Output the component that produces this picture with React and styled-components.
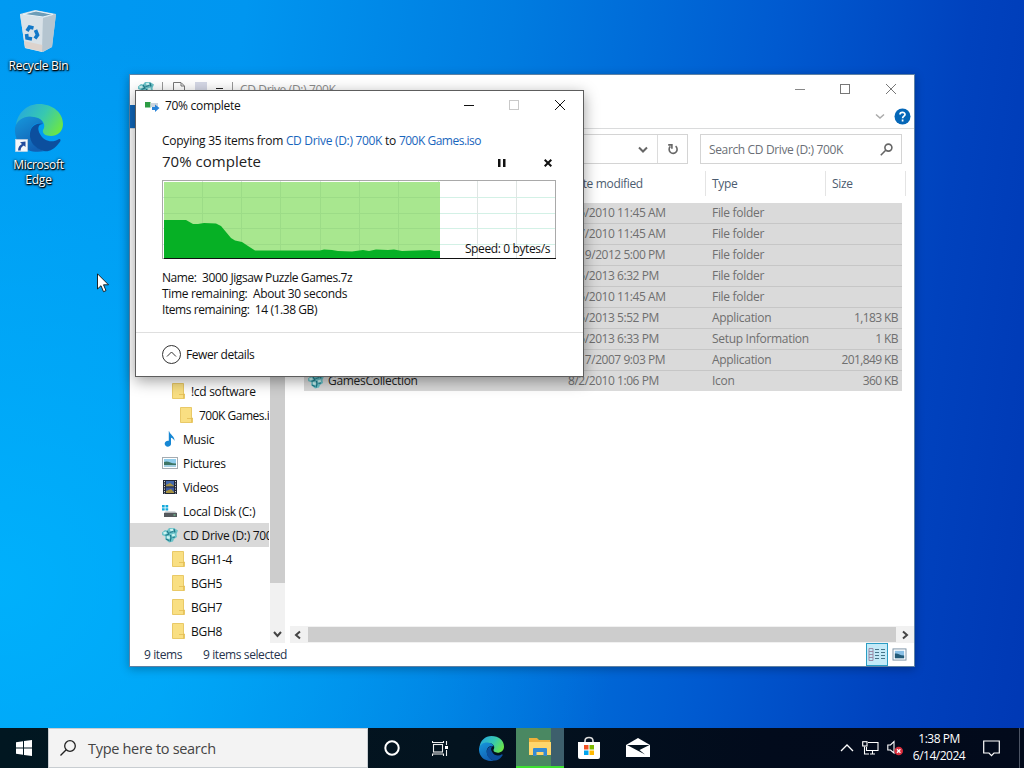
import React from "react";
import styled, { createGlobalStyle } from "styled-components";

const GlobalStyle = createGlobalStyle`
    * {
        box-sizing: border-box;
    }

    body {
        margin: 0;
        overflow: hidden;
        font-family: "Open Sans", "Noto Sans", sans-serif;
        font-size: 12px;
    }

    svg {
        display: block;
        flex-shrink: 0;
    }
`;

const Desktop = styled.div`
    position: relative;
    width: 1024px;
    height: 768px;
    overflow: hidden;
    display: flex;
    flex-direction: column;
    justify-content: space-between;
    background:
        radial-gradient(ellipse 620px 560px at 0% 76%, rgba(0, 184, 255, 0.75) 0%, rgba(0, 176, 250, 0) 100%),
        linear-gradient(97deg, #009af2 0%, #0096f0 22%, #007ce0 46%, #005ad0 70%, #0042be 87%, #0038b4 100%);
`;

/* ---------- desktop icons ---------- */

const Shortcuts = styled.div`
    display: flex;
    flex-direction: column;
    gap: 30px;
    width: 77px;
    padding-top: 6px;
`;

const Shortcut = styled.div`
    display: flex;
    flex-direction: column;
    align-items: center;
    text-align: center;
    color: #fff;
    line-height: 15px;
    letter-spacing: -0.25px;
    text-shadow: 1px 1px 1px #000, 0 1px 2px #000, 0 0 3px rgba(0, 0, 0, 0.8);

    svg {
        margin-bottom: 4px;
    }
`;

const RecycleIcon = () => (
    <svg width="48" height="48" viewBox="0 0 48 48">
        <path d="M5 8 L20 4 L41 8 L37 41 L28 46 L10 42 Z" fill="#c9dbe6" />
        <path d="M5 8 L28 12 L27 46 L10 42 Z" fill="#d9e2e8" />
        <path d="M28 12 L41 8 L37 41 L27 46 Z" fill="#b5c5d0" />
        <path d="M8 8.3 L21 5 L38 8.4 L28 11 Z" fill="#6d9db8" stroke="#e9f2f7" strokeWidth="1" />
        <path d="M9 35 L27.4 39 L27 45.5 L10.4 41.5 Z" fill="#ddd0c6" opacity=".8" />
        <g fill="none" stroke="#1278c8" strokeWidth="3.6">
            <path d="M12 25 L14.5 21 L18.5 22" />
            <path d="M20.5 24 L22.5 29 L20 32.5" />
            <path d="M17 33 L12 32 L11.6 28" />
        </g>
    </svg>
);

const EdgeArt = ({ id }) => (
    <>
        <defs>
            <linearGradient id={id + "a"} x1="0" y1="0.3" x2="1" y2="0.75">
                <stop offset="0" stopColor="#27a9dc" />
                <stop offset=".5" stopColor="#37c8b0" />
                <stop offset="1" stopColor="#6fe83f" />
            </linearGradient>
            <linearGradient id={id + "b"} x1="0" y1="0" x2="0.5" y2="1">
                <stop offset="0" stopColor="#1698dc" />
                <stop offset="1" stopColor="#1260b4" />
            </linearGradient>
        </defs>
        <path d="M1 22 C2 9 12 0 24 0 C38 0 48 9 48 20 C48 28 42 32 36 32 C30 32 27 29 28 26 C31 22 29 15 21 14 C12 13 4 17 1 22 Z" fill={"url(#" + id + "a)"} />
        <path d="M0 24 C2 15 11 11 19 13 C25 14 28 17 28 20 C20 17 14 24 15 31 C16 40 23 46 30 47 C12 51 -1 40 0 24 Z" fill={"url(#" + id + "b)"} />
        <path d="M28 20 C23 20 22 25 25 30 C29 38 38 39 44 35 C46 35 46 37 44 39 C39 46 33 48 29 47 C20 45 14 37 15 30 C15 24 20 18 28 20 Z" fill="#0c4f9e" />
    </>
);

const EdgeShortcutIcon = () => (
    <svg width="50" height="50" viewBox="-1 -1 50 50">
        <EdgeArt id="desk" />
        <rect x="0.5" y="35.5" width="12" height="12" fill="#f5f7fa" stroke="#cfd8e2" strokeWidth=".6" />
        <path d="M3 46.5 C3 43 5 41 7 40 L5 38.2 L10.5 37.5 L10.5 43 L8.8 41.6 C6 43 5.5 45 5.8 46.5 Z" fill="#234b9c" />
    </svg>
);

/* ---------- explorer window ---------- */

const Explorer = styled.section`
    position: absolute;
    left: 129px;
    top: 74px;
    width: 786px;
    height: 593px;
    display: flex;
    flex-direction: column;
    background: #fff;
    border: 1px solid rgba(25, 75, 125, 0.7);
    color: #3b4658;
    box-shadow: 0 2px 9px rgba(0, 0, 0, 0.28);
`;

const ExplorerTitle = styled.header`
    display: flex;
    align-items: center;
    height: 29px;
    padding: 0 0 1px 8px;
    color: #8c8c8c;
`;

const QuickAccess = styled.div`
    display: flex;
    align-items: center;
    gap: 7px;
    flex: 1;
    letter-spacing: -0.35px;

    span {
        margin-left: -1px;
    }
`;

const WindowButtons = styled.div`
    display: flex;

    svg {
        width: 46px;
    }
`;

const RibbonTabs = styled.div`
    display: flex;
    align-items: center;
    justify-content: flex-end;
    gap: 9px;
    height: 25px;
    padding-right: 3px;
    border-bottom: 1px solid #dadbdc;
`;

const FileTab = styled.div`
    width: 56px;
    height: 23px;
    margin-right: auto;
    background: #1068bc;
`;

const AddressRow = styled.div`
    display: flex;
    gap: 12px;
    padding: 5px 12px 5px 100px;
    height: 40px;
`;

const Box = styled.div`
    display: flex;
    align-items: center;
    justify-content: space-between;
    width: ${({ $width }) => ($width ? $width + "px" : "auto")};
    flex: ${({ $width }) => ($width ? "none" : 1)};
    height: 30px;
    padding: 0 ${({ $width }) => ($width ? 8 : 0)}px 0 8px;
    border: 1px solid #d4d4d4;
    color: #6b6f76;
    letter-spacing: -0.36px;
`;

const AddressTools = styled.div`
    display: flex;
    align-items: center;
    margin-left: auto;
    height: 100%;
`;

const RefreshButton = styled.div`
    display: grid;
    place-items: center;
    width: 30px;
    height: 100%;
    margin-left: 9px;
    border-left: 1px solid #dcdcdc;
`;

const Panes = styled.div`
    display: flex;
    height: 474px;
`;

const NavPane = styled.nav`
    display: flex;
    flex-direction: column;
    justify-content: flex-end;
    width: 139px;
    margin-right: 1px;
    overflow: hidden;
    color: #111;
`;

const NavItem = styled.div`
    display: flex;
    align-items: center;
    flex: none;
    gap: 5px;
    height: 24px;
    padding-left: ${({ $level }) => ($level ? 33 : 32) + $level * 8}px;
    background: ${({ $selected }) => ($selected ? "#d9d9d9" : "transparent")};
    white-space: nowrap;
    letter-spacing: ${({ $level }) => ($level === 2 ? -0.5 : -0.3)}px;
`;

const VScroll = styled.div`
    display: flex;
    flex-direction: column;
    align-items: center;
    justify-content: space-between;
    width: 15px;
    padding-bottom: 4px;
    background: #f1f1f1;
`;

const VThumb = styled.div`
    width: 100%;
    height: 414px;
    background: #cdcdcd;
`;

const FilePane = styled.main`
    display: flex;
    flex-direction: column;
    flex: 1;
    margin-left: 5px;
    min-width: 0;
`;

const columns = "258px 144px 120px 80px";

const Columns = styled.div`
    display: grid;
    grid-template-columns: ${columns};
    height: 25px;
    margin: 2px 0 7px 14px;
    color: #4c5c70;
    letter-spacing: -0.35px;
`;

const Column = styled.div`
    display: flex;
    align-items: center;
    padding-left: 6px;
    border-right: 1px solid #e4e4e4;
`;

const FileList = styled.div`
    flex: 1;
    margin-left: 14px;
    width: 598px;
`;

const FileRow = styled.div`
    display: grid;
    grid-template-columns: ${columns};
    align-items: center;
    height: 21px;
    background: #dadada;
    border-bottom: 1px solid #c6c6c6;
    color: #6f6f6f;
    letter-spacing: -0.28px;

    &:last-child {
        height: 20px;
        border-bottom: none;
    }
`;

const Cell = styled.div`
    display: flex;
    align-items: center;
    justify-content: ${({ $right }) => ($right ? "flex-end" : "flex-start")};
    gap: 4px;
    padding-left: ${({ $dark }) => ($dark ? 4 : 6)}px;
    padding-right: ${({ $right }) => ($right ? 8 : 0)}px;
    height: 20px;
    padding-bottom: 1px;
    white-space: nowrap;
    letter-spacing: ${({ $tight, $right }) => ($right ? -0.6 : $tight ? -0.45 : -0.3)}px;
    color: ${({ $dark }) => ($dark ? "#222" : "inherit")};
`;

const HScroll = styled.div`
    display: flex;
    align-items: center;
    justify-content: space-between;
    height: 17px;
    padding: 0 4px 0 3px;
    background: #f1f1f1;
`;

const HThumb = styled.div`
    width: 588px;
    height: 15px;
    background: #cdcdcd;
`;

const StatusBar = styled.footer`
    display: flex;
    align-items: center;
    gap: 21px;
    height: 23px;
    padding: 0 7px 0 14px;
    color: #26334d;
    letter-spacing: -0.4px;
`;

const ViewModes = styled.div`
    display: flex;
    align-items: center;
    gap: 4px;
    margin-left: auto;
`;

const ActiveView = styled.div`
    display: grid;
    place-items: center;
    width: 22px;
    height: 23px;
    background: #c3eaf8;
    border: 1px solid #2b9dc4;
`;

const FolderIcon = () => (
    <svg width="15" height="16" viewBox="0 0 15 16">
        <path d="M1.5 .5 H12.5 V11 H13.5 V15.5 H1.5 Z" fill="#f9df82" stroke="#e6c45c" strokeWidth=".9" />
        <path d="M8 11.5 H13.5 M12.5 11 V15.5" fill="none" stroke="#e3bd55" strokeWidth=".8" />
    </svg>
);

const MusicIcon = () => (
    <svg width="16" height="16" viewBox="0 0 16 16">
        <path d="M7 0 C8 4 13 5 12.5 10 C12 8 10 7 9 6.8 V12 A3.2 3 0 1 1 6.8 9.8 V0 Z" fill="#1687d4" />
    </svg>
);

const PicturesIcon = () => (
    <svg width="16" height="16" viewBox="0 0 16 16">
        <rect x=".5" y="2.5" width="15" height="11" fill="#fff" stroke="#a4acb2" />
        <path d="M2 4 H14 V12 H2 Z" fill="#8fcdec" />
        <path d="M2 7 C6 5 9 9 14 8.5 V11 H2 Z" fill="#3d7565" />
        <path d="M2 10 H14 V12 H2 Z" fill="#a3cfe2" />
    </svg>
);

const VideosIcon = () => (
    <svg width="16" height="16" viewBox="0 0 16 16">
        <rect x="1" y="1" width="14" height="14" fill="#222838" />
        <rect x="4" y="2" width="8" height="5.3" fill="#4469ad" />
        <rect x="4" y="8.5" width="8" height="5.5" fill="#3a58a2" />
        <path d="M4 6 L8 4 L12 6.8 V7.3 H4 Z M4 12 L9 10 L12 13 V14 H4 Z" fill="#a69243" />
        <path d="M2.5 2 V15 M13.5 2 V15" stroke="#d2d6da" strokeDasharray="1.2 1.3" />
    </svg>
);

const DiskIcon = () => (
    <svg width="16" height="16" viewBox="0 0 16 16">
        <path d="M0 2 H2.7 V4.4 H0 Z M3.5 2 H6.2 V4.4 H3.5 Z M0 5.2 H2.7 V7.6 H0 Z M3.5 5.2 H6.2 V7.6 H3.5 Z" fill="#15aadb" />
        <path d="M3.5 8.5 H13 L15 10 H2 Z" fill="#b3b7bb" />
        <path d="M2 10 H15 V14 H2 Z" fill="#55595d" />
        <path d="M11.5 12 H13.5" stroke="#7ce2a2" />
    </svg>
);

const CdIcon = () => (
    <svg width="16" height="16" viewBox="0 0 16 16">
        <path d="M0 5.5 L3 3 L5 3.5 L7 1 L12 1 L16 3.5 L14.5 7 L15 10 L12 12 L11 14.5 L7 15.5 L3 12 L3.5 9.5 L0 8 Z" fill="#6cc3c9" />
        <path d="M1 5.5 L4 4.5 L5 6.5 L2 7.5 Z M8 2 L11 1.8 L11.5 3.5 L8.5 4.5 Z M9.5 7.5 L12.5 6.5 L13 9 L10.5 9.5 Z M5 9 L8 9.5 L7.5 12 L5 11.5 Z" fill="#cdf3f1" />
        <path d="M5 4 L7 7 L3.5 8.5 M7.5 5.5 L11.5 4.5 M12 2 L13 5.5 M8.5 8 L9 11 L8 14.5 M10.5 10.5 L13 10 M4 12 L7 13.5" stroke="#1f7888" strokeWidth="1.2" fill="none" />
    </svg>
);

const Chevron = ({ d, color = "#444", w = 2 }) => (
    <svg width="10" height="10" viewBox="0 0 10 10" fill="none" stroke={color} strokeWidth={w}>
        <path d={d} />
    </svg>
);

const Caption = ({ kind, color }) => (
    <svg height="29" viewBox="0 0 46 29" fill="none" stroke={color} strokeWidth="1">
        {kind === "min" && <path d="M19 14.5 H29" />}
        {kind === "max" && <rect x="18.5" y="9.5" width="9" height="9" />}
        {kind === "close" && <path d="M18 9 L28 19 M28 9 L18 19" />}
    </svg>
);

const icons = {
    folder: <FolderIcon />,
    music: <MusicIcon />,
    pictures: <PicturesIcon />,
    videos: <VideosIcon />,
    disk: <DiskIcon />,
    cd: <CdIcon />,
};

const navItems = [
    { name: "!cd software", icon: "folder", level: 1 },
    { name: "700K Games.iso", icon: "folder", level: 2 },
    { name: "Music", icon: "music", level: 0 },
    { name: "Pictures", icon: "pictures", level: 0 },
    { name: "Videos", icon: "videos", level: 0 },
    { name: "Local Disk (C:)", icon: "disk", level: 0 },
    { name: "CD Drive (D:) 700K", icon: "cd", level: 0, selected: true },
    { name: "BGH1-4", icon: "folder", level: 1 },
    { name: "BGH5", icon: "folder", level: 1 },
    { name: "BGH7", icon: "folder", level: 1 },
    { name: "BGH8", icon: "folder", level: 1 },
];

const files = [
    { date: "8/5/2010 11:45 AM", type: "File folder" },
    { date: "8/7/2010 11:45 AM", type: "File folder" },
    { date: "9/19/2012 5:00 PM", type: "File folder" },
    { date: "3/5/2013 6:32 PM", type: "File folder" },
    { date: "8/5/2010 11:45 AM", type: "File folder" },
    { date: "3/5/2013 5:52 PM", type: "Application", size: "1,183 KB" },
    { date: "3/5/2013 6:33 PM", type: "Setup Information", size: "1 KB" },
    { date: "9/17/2007 9:03 PM", type: "Application", size: "201,849 KB" },
    { name: "GamesCollection", date: "8/2/2010 1:06 PM", type: "Icon", size: "360 KB" },
];

const ExplorerWindow = () => (
    <Explorer>
        <ExplorerTitle>
            <QuickAccess>
                <CdIcon />
                <svg width="64" height="16" viewBox="0 0 64 16" fill="none" stroke="#777">
                    <path d="M1.5 1 V15" stroke="#999" />
                    <path d="M12.5 1.5 H20 L23.5 5 V15 H12.5 Z M20 2 V5 H23" />
                    <path d="M34 1 H46 V15 H34 Z" fill="#d5d8e6" stroke="none" />
                    <path d="M55 7.5 H62" stroke="#222" />
                </svg>
                <svg width="2" height="16"><path d="M.5 1 V15" stroke="#999" /></svg>
                <span>CD Drive (D:) 700K</span>
            </QuickAccess>
            <WindowButtons>
                <Caption kind="min" color="#888" />
                <Caption kind="max" color="#777" />
                <Caption kind="close" color="#777" />
            </WindowButtons>
        </ExplorerTitle>
        <RibbonTabs>
            <FileTab />
            <Chevron d="M1 3.5 L5 7 L9 3.5" color="#aaa" w={1.5} />
            <svg width="17" height="17" viewBox="0 0 17 17">
                <circle cx="8.5" cy="8.5" r="8" fill="#0567b8" />
                <path d="M6 6.6 C6 3.6 11 3.6 11 6.4 C11 8.2 8.6 8.1 8.6 10.3 M8.6 11.5 V13.4" fill="none" stroke="#fff" strokeWidth="1.7" />
            </svg>
        </RibbonTabs>
        <AddressRow>
            <Box>
                <AddressTools>
                    <Chevron d="M1 3.5 L5 7.5 L9 3.5" color="#666" />
                    <RefreshButton>
                        <svg width="12" height="12" viewBox="0 0 12 12" fill="none" stroke="#666" strokeWidth="1.6">
                            <path d="M8.6 3.2 A4 4 0 1 1 3.4 3.4 M1.2 1.9 H4.9 V5.8" />
                        </svg>
                    </RefreshButton>
                </AddressTools>
            </Box>
            <Box $width={202}>
                <span>Search CD Drive (D:) 700K</span>
                <svg width="13" height="13" viewBox="0 0 13 13" fill="none" stroke="#666" strokeWidth="1.6">
                    <circle cx="8.4" cy="4.6" r="3.5" />
                    <path d="M5.7 7.3 L.8 12.2" />
                </svg>
            </Box>
        </AddressRow>
        <Panes>
            <NavPane>
                {navItems.map((item) => (
                    <NavItem key={item.name} $level={item.level} $selected={item.selected}>
                        {icons[item.icon]}
                        <span>{item.name}</span>
                    </NavItem>
                ))}
            </NavPane>
            <VScroll>
                <VThumb />
                <Chevron d="M1 3 L4.5 7 L8 3" />
            </VScroll>
            <FilePane>
                <Columns>
                    <Column />
                    <Column>Date modified</Column>
                    <Column>Type</Column>
                    <Column>Size</Column>
                </Columns>
                <FileList>
                    {files.map((file, index) => (
                        <FileRow key={index}>
                            <Cell $dark>
                                {file.name && <CdIcon />}
                                {file.name}
                            </Cell>
                            <Cell $tight>{file.date}</Cell>
                            <Cell>{file.type}</Cell>
                            <Cell $right>{file.size}</Cell>
                        </FileRow>
                    ))}
                </FileList>
                <HScroll>
                    <Chevron d="M7 1.5 L3 5 L7 8.5" />
                    <HThumb />
                    <Chevron d="M3 1.5 L7 5 L3 8.5" />
                </HScroll>
            </FilePane>
        </Panes>
        <StatusBar>
            <span>9 items</span>
            <span>9 items selected</span>
            <ViewModes>
                <ActiveView>
                    <svg width="18" height="15" viewBox="0 0 18 15" fill="none">
                        <path d="M1 1.5 H5 V13.5 H1 Z M1 4.5 H5 M1 7.5 H5 M1 10.5 H5" stroke="#9a8ba6" />
                        <path d="M7 2.5 H11 M13 2.5 H17 M7 5.5 H11 M13 5.5 H17 M7 8.5 H11 M13 8.5 H17 M7 11.5 H11 M13 11.5 H17" stroke="#47768a" />
                    </svg>
                </ActiveView>
                <svg width="15" height="13" viewBox="0 1 16 14">
                    <rect x="1" y="2" width="14" height="12" fill="#fff" stroke="#778fa3" />
                    <path d="M3 4 H13 V12 H3 Z" fill="#88bfe5" />
                    <path d="M3 7 C6 6 8 9 13 9 V12 H3 Z" fill="#235b78" />
                </svg>
            </ViewModes>
        </StatusBar>
    </Explorer>
);

/* ---------- copy dialog ---------- */

const Dialog = styled.section`
    position: absolute;
    left: 135px;
    top: 90px;
    width: 449px;
    height: 287px;
    display: flex;
    flex-direction: column;
    background: #fff;
    border: 1px solid #5d5d5d;
    color: #111;
    box-shadow: 0 4px 14px rgba(0, 0, 0, 0.38);
    letter-spacing: -0.3px;
`;

const DialogTitle = styled.header`
    display: flex;
    align-items: center;
    height: 29px;
    padding-left: 8px;

    svg:first-child {
        margin-right: 5px;
    }

    ${WindowButtons} {
        margin-left: auto;
    }

    ${WindowButtons} svg {
        margin-right: 0;
    }
`;

const DialogBody = styled.div`
    display: flex;
    flex-direction: column;
    height: 212px;
    padding: 13px 26px 0;
`;

const CopyLine = styled.div`
    line-height: 16px;
    letter-spacing: -0.25px;
`;

const Link = styled.span`
    color: #1a66bd;
    letter-spacing: ${({ $tight }) => ($tight ? -0.5 : -0.31)}px;
`;

const ProgressLine = styled.div`
    display: flex;
    align-items: center;
    height: 26px;
    padding-bottom: 2px;
    font-size: 15px;
    letter-spacing: 0.02px;
    color: #222;

    svg:nth-of-type(1) {
        margin-left: auto;
        margin-right: 38px;
    }

    svg:nth-of-type(2) {
        margin-right: 5px;
    }

    svg {
        margin-top: 3px;
    }
`;

const SpeedChart = styled.div`
    position: relative;
    height: 80px;
    margin-top: 5px;
    width: 395px;
`;

const Speed = styled.span`
    position: absolute;
    right: 7px;
    bottom: 3px;
    line-height: 16px;
    letter-spacing: -0.38px;
`;

const Details = styled.div`
    margin-top: 10px;
    line-height: 16px;
    white-space: pre;
    letter-spacing: ${({ $tight }) => ($tight ? -0.42 : -0.34)}px;

    & + & {
        margin-top: 0;
    }
`;

const DialogFooter = styled.footer`
    display: flex;
    align-items: center;
    gap: 5px;
    flex: 1;
    padding-left: 26px;
    border-top: 1px solid #dfdfdf;
    letter-spacing: -0.42px;
`;

const gridX = [40, 79, 118, 158, 197, 236, 276, 315, 354];
const gridY = [17, 33, 48, 64];

const CopyDialog = () => (
    <Dialog>
        <DialogTitle>
            <svg width="16" height="16" viewBox="0 0 16 16">
                <rect x="1" y="4" width="5.5" height="5.5" fill="#2c9c43" />
                <path d="M6.5 5 H14 V9 H6.5 Z" fill="#ccd4dd" />
                <path d="M8 9 H11 V6.5 L15.5 10 L11 14 V12 H8 Z" fill="#2983d8" />
            </svg>
            <span>70% complete</span>
            <WindowButtons>
                <Caption kind="min" color="#111" />
                <Caption kind="max" color="#c9c9c9" />
                <Caption kind="close" color="#111" />
            </WindowButtons>
        </DialogTitle>
        <DialogBody>
            <CopyLine>
                Copying 35 items from <Link>CD Drive (D:) 700K</Link> to <Link $tight>700K Games.iso</Link>
            </CopyLine>
            <ProgressLine>
                <span>70% complete</span>
                <svg width="8" height="8" viewBox="0 0 8 8"><path d="M0 0 H2.5 V8 H0 Z M5 0 H7.5 V8 H5 Z" fill="#111" /></svg>
                <svg width="8" height="8" viewBox="0 0 8 8"><path d="M.7 .7 L7.3 7.3 M7.3 .7 L.7 7.3" stroke="#111" strokeWidth="2" /></svg>
            </ProgressLine>
            <SpeedChart>
                <svg width="395" height="80" viewBox="0 0 395 80">
                    <rect x=".5" y=".5" width="393" height="78" fill="#fff" stroke="#a9a9a9" />
                    <g stroke="#d3f1e6">
                        {gridY.map((y) => <path key={y} d={`M1 ${y + 0.5} H393`} />)}
                    </g>
                    <g stroke="#dfe5e3">
                        {gridX.map((x) => <path key={x} d={`M${x + 0.5} 1 V78`} />)}
                    </g>
                    <rect x="2" y="2" width="276" height="76" fill="#a8e78f" />
                    <g stroke="#9cdc87">
                        {gridY.map((y) => <path key={y} d={`M2 ${y + 0.5} H278`} />)}
                        {gridX.slice(0, 6).map((x) => <path key={x} d={`M${x + 0.5} 2 V78`} />)}
                    </g>
                    <path d="M2 78 V40 H24 L31 44 L36 44 L42 43 L54 43.5 L59 46 L69 58 L73 60.5 L80 62 L86 66 L93 70.5 H158 L162 69.5 L170 70 L176 71 L190 71.5 L201 70 L207 71 L214 69.5 L226 70 L232 69.5 L240 71 L268 70 L272 71 H278 V78 Z" fill="#06b025" />
                    <path d="M2 78.5 H394" stroke="#111" />
                </svg>
                <Speed>Speed: 0 bytes/s</Speed>
            </SpeedChart>
            <Details $tight>Name:  3000 Jigsaw Puzzle Games.7z</Details>
            <Details>Time remaining:  About 30 seconds</Details>
            <Details $tight>Items remaining:  14 (1.38 GB)</Details>
        </DialogBody>
        <DialogFooter>
            <svg width="19" height="19" viewBox="0 0 19 19" fill="none" stroke="#333">
                <circle cx="9.5" cy="9.5" r="9" />
                <path d="M5 11.5 L9.5 7 L14 11.5" />
            </svg>
            <span>Fewer details</span>
        </DialogFooter>
    </Dialog>
);

/* ---------- taskbar ---------- */

const Taskbar = styled.div`
    display: flex;
    align-items: stretch;
    height: 40px;
    background: linear-gradient(90deg, #011721 0%, #03131f 45%, #020b1c 75%, #020a1b 100%);
    color: #fff;
`;

const TaskButton = styled.div`
    display: grid;
    place-items: center;
    width: 48px;
    margin-left: ${({ $gap }) => $gap || 0}px;
    background: ${({ $active }) => ($active ? "linear-gradient(90deg, #4a8862 0 35px, #3d5f6c 35px)" : "transparent")};
    border-bottom: ${({ $active }) => ($active ? "2px solid #3de032" : "none")};
`;

const SearchBox = styled.div`
    display: flex;
    align-items: center;
    gap: 12px;
    width: 320px;
    padding-left: 11px;
    background: #f3f3f3;
    border: 1px solid #c8cdd1;
    color: #444;
    font-size: 14.5px;
    letter-spacing: -0.3px;
`;

const Tray = styled.div`
    display: flex;
    align-items: center;
    margin-left: auto;
`;

const TrayIcons = styled.div`
    display: flex;
    align-items: center;
    gap: 8px;
    margin-right: 8px;
`;

const Clock = styled.div`
    width: 56px;
    line-height: 17px;
    padding-bottom: 2px;
    text-align: center;
    letter-spacing: -0.5px;
    white-space: nowrap;
`;

const ActionCenter = styled.svg`
    margin-left: 16px;
`;

const ShowDesktop = styled.div`
    width: 5px;
    height: 40px;
    margin-left: 19px;
    border-left: 1px solid #4c5464;
`;

const TaskbarRow = () => (
    <Taskbar>
        <TaskButton>
            <svg width="16" height="16" viewBox="0 0 16 16" fill="#fff">
                <path d="M0 2.3 L7 1.3 V7.5 H0 Z M8 1.1 L16 0 V7.5 H8 Z M0 8.5 H7 V14.7 L0 13.7 Z M8 8.5 H16 V16 L8 14.9 Z" />
            </svg>
        </TaskButton>
        <SearchBox>
            <svg width="16" height="16" viewBox="0 0 16 16" fill="none" stroke="#222" strokeWidth="1.3">
                <circle cx="10" cy="6" r="5.3" />
                <path d="M6.2 9.8 L.5 15.5" />
            </svg>
            <span>Type here to search</span>
        </SearchBox>
        <TaskButton>
            <svg width="16" height="16" viewBox="0 0 16 16">
                <circle cx="8" cy="8" r="6.7" fill="none" stroke="#fff" strokeWidth="2" />
            </svg>
        </TaskButton>
        <TaskButton>
            <svg width="17" height="17" viewBox="0 0 17 17" fill="none" stroke="#eee" strokeWidth="1.1">
                <rect x="1.5" y="4.5" width="9" height="7.5" />
                <path d="M.5 1 V2.5 H11.5 V1 M.5 16 V14 H11.5 V16 M14.5 1 V5 M14.5 10 V16" />
                <path d="M13 6 H16 V9 H13 Z" fill="#fff" stroke="none" />
            </svg>
        </TaskButton>
        <TaskButton $gap={3}>
            <svg width="25" height="25" viewBox="0 0 48 48"><EdgeArt id="bar" /></svg>
        </TaskButton>
        <TaskButton $active $gap={1}>
            <svg width="24" height="20" viewBox="0 0 24 20">
                <path d="M1 1 H9 L11 3 H22 V18 H1 Z" fill="#eeb03a" />
                <path d="M1 5 H23 V18 H1 Z" fill="#ffd66b" />
                <path d="M5 19 V12 Q5 11 6 11 H18 Q19 11 19 12 V19 H15.5 V15 H8.5 V19 Z" fill="#348bd2" />
            </svg>
        </TaskButton>
        <TaskButton $gap={1}>
            <svg width="24" height="24" viewBox="0 0 24 24">
                <path d="M8 7 V5 Q8 1.5 12 1.5 Q16 1.5 16 5 V7" fill="none" stroke="#ddd" strokeWidth="1.6" />
                <path d="M1 6 H23 V21 Q23 23 21 23 H3 Q1 23 1 21 Z" fill="#fff" />
                <path d="M7 9 H11.5 V13.5 H7 Z" fill="#f25022" />
                <path d="M12.5 9 H17 V13.5 H12.5 Z" fill="#7fba00" />
                <path d="M7 14.5 H11.5 V19 H7 Z" fill="#00a4ef" />
                <path d="M12.5 14.5 H17 V19 H12.5 Z" fill="#ffb900" />
            </svg>
        </TaskButton>
        <TaskButton $gap={1}>
            <svg width="24" height="20" viewBox="0 0 24 20">
                <path d="M0 7 L12 0 L24 7 V19 H0 Z" fill="#fff" />
                <path d="M1 7 H23.5 L13.5 12 L19 16.5 Z" fill="#05131f" />
            </svg>
        </TaskButton>
        <Tray>
            <TrayIcons>
                <svg width="14" height="8" viewBox="0 0 14 8" fill="none" stroke="#fff" strokeWidth="1.3">
                    <path d="M1 7 L7 1 L13 7" />
                </svg>
                <svg width="17" height="14" viewBox="0 0 17 14" fill="none" stroke="#fff" strokeWidth="1.1">
                    <path d="M6 1.5 H16 V9.5 H4.5 V6 M8 13 H13 M10.5 9.5 V13 M2.5 5.5 V13 H7" />
                    <rect x=".7" y=".7" width="4.3" height="4.3" />
                </svg>
                <svg width="16" height="16" viewBox="0 0 16 16">
                    <path d="M.8 5 H3.5 L7 1.5 V13 L3.5 10 H.8 Z" fill="none" stroke="#fff" strokeWidth="1.1" />
                    <circle cx="11.7" cy="11" r="4.3" fill="#d92d3c" />
                    <path d="M10 9.3 L13.4 12.7 M13.4 9.3 L10 12.7" stroke="#fff" strokeWidth="1.3" />
                </svg>
            </TrayIcons>
            <Clock>
                <div>1:38 PM</div>
                <div>6/14/2024</div>
            </Clock>
            <ActionCenter width="17" height="17" viewBox="0 0 17 17" fill="none" stroke="#fff" strokeWidth="1.2">
                <path d="M.7 1 H16.3 V13 H11 L8.5 15.7 L6 13 H.7 Z" />
            </ActionCenter>
            <ShowDesktop />
        </Tray>
    </Taskbar>
);

const Pointer = styled.svg`
    position: absolute;
    left: 97px;
    top: 273px;
`;

const App = () => (
    <>
        <GlobalStyle />
        <Desktop>
            <Shortcuts>
                <Shortcut>
                    <RecycleIcon />
                    <span>Recycle Bin</span>
                </Shortcut>
                <Shortcut>
                    <EdgeShortcutIcon />
                    <span>Microsoft<br />Edge</span>
                </Shortcut>
            </Shortcuts>
            <ExplorerWindow />
            <CopyDialog />
            <Pointer width="13" height="20" viewBox="0 0 13 20">
                <path d="M.5 .8 V16 L4 12.7 L6.5 18.7 L9 17.6 L6.5 11.8 H11.5 Z" fill="#fff" stroke="#111" strokeWidth=".9" />
            </Pointer>
            <TaskbarRow />
        </Desktop>
    </>
);

export default App;
